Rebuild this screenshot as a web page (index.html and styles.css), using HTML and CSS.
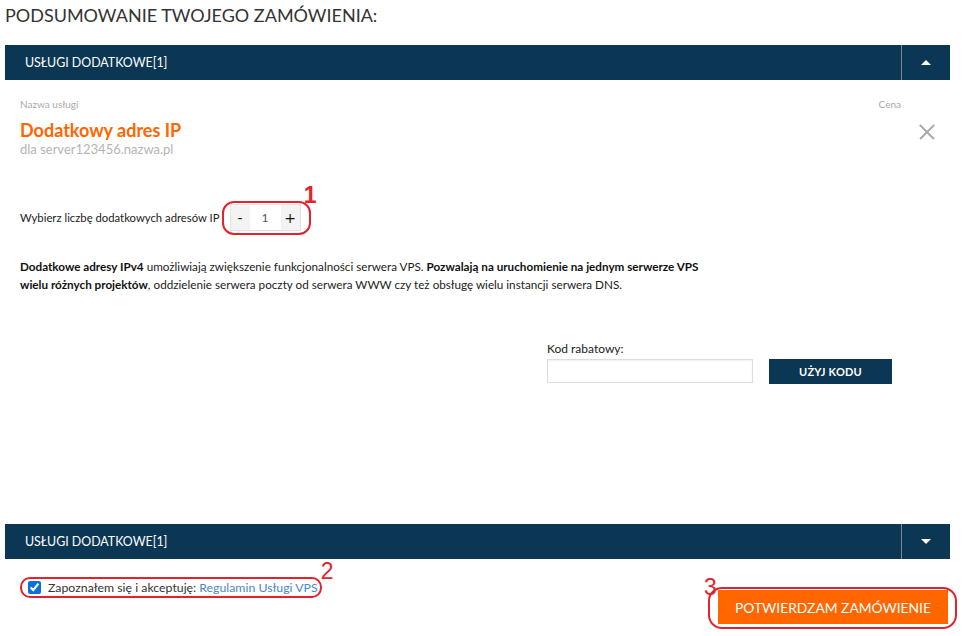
FILE: index.html
```html
<!DOCTYPE html>
<html lang="pl">
<head>
<meta charset="utf-8">
<title>Podsumowanie zamówienia</title>
<link rel="stylesheet" href="styles.css">
</head>
<body>
<div class="page">
  <h1 class="title">PODSUMOWANIE TWOJEGO ZAMÓWIENIA:</h1>

  <div class="bar">
    <div class="bar-title">USŁUGI DODATKOWE[1]</div>
    <div class="bar-toggle"><span class="tri tri-up"></span></div>
  </div>

  <div class="content">
    <div class="cols">
      <span class="label">Nazwa usługi</span>
      <span class="label">Cena</span>
    </div>
    <div class="service">
      <div>
        <div class="service-name">Dodatkowy adres IP</div>
        <div class="service-host">dla server123456.nazwa.pl</div>
      </div>
      <span class="close"></span>
    </div>

    <div class="qty-row">
      <span class="qty-label">Wybierz liczbę dodatkowych adresów IP</span>
      <div class="spinner">
        <span class="spin-btn">-</span>
        <span class="spin-val">1</span>
        <span class="spin-btn">+</span>
        <span class="mark mark-1">1</span>
      </div>
    </div>

    <p class="desc"><b>Dodatkowe adresy IPv4</b> umożliwiają zwiększenie funkcjonalności serwera VPS. <b>Pozwalają na uruchomienie na jednym serwerze VPS<br>wielu różnych projektów</b>, oddzielenie serwera poczty od serwera WWW czy też obsługę wielu instancji serwera DNS.</p>

    <div class="promo">
      <label class="promo-label">Kod rabatowy:</label>
      <div class="promo-row">
        <input class="promo-input" type="text">
        <button class="promo-btn">UŻYJ KODU</button>
      </div>
    </div>
  </div>

  <div class="bar">
    <div class="bar-title">USŁUGI DODATKOWE[1]</div>
    <div class="bar-toggle"><span class="tri tri-down"></span></div>
  </div>

  <div class="footer">
    <label class="accept">
      <input type="checkbox" checked>
      <span>Zapoznałem się i akceptuję: <a href="#" class="link">Regulamin Usługi VPS</a></span>
      <span class="mark mark-2">2</span>
    </label>
    <div class="confirm-wrap">
      <button class="confirm">POTWIERDZAM ZAMÓWIENIE</button>
      <span class="mark mark-3">3</span>
    </div>
  </div>
</div>
</body>
</html>
```

FILE: styles.css
```css
* { box-sizing: border-box; }
html, body { margin: 0; padding: 0; background: #fff; }
body { font-family: Lato, "Open Sans", sans-serif; color: #222; }

.page { width: 955px; padding: 0 5px; }

.title {
  margin: 0;
  padding-top: 4px;
  height: 45px;
  font-size: 18px;
  font-weight: 400;
  color: #333;
}

.bar {
  display: flex;
  height: 35px;
  background: #0b3654;
  color: #fff;
}
.bar-title {
  flex: 1;
  display: flex;
  align-items: center;
  padding-left: 20px;
  font-size: 12.4px;
}
.bar-toggle {
  width: 49px;
  border-left: 1px solid #7c8a96;
  display: flex;
  align-items: center;
  justify-content: center;
}
.tri { width: 0; height: 0; border-left: 5px solid transparent; border-right: 5px solid transparent; }
.tri-up { border-bottom: 5px solid #fff; }
.tri-down { border-top: 5px solid #fff; }

.content {
  height: 444px;
  padding: 0 15px;
}
.cols {
  display: flex;
  justify-content: space-between;
  padding-top: 18px;
  padding-right: 34px;
  height: 39px;
}
.label { font-size: 10px; color: #aaa; }

.service { display: flex; justify-content: space-between; align-items: flex-start; }
.service-name { font-size: 18px; font-weight: 700; color: #ff6600; line-height: 22px; }
.service-host { font-size: 13px; color: #b5b5b5; line-height: 16px; }
.close {
  position: relative;
  width: 16px; height: 16px;
  margin-top: 5px;
}
.close::before, .close::after {
  content: "";
  position: absolute;
  left: -2px; top: 7px;
  width: 20px; height: 1.5px;
  background: #a8a8a8;
  transform: rotate(45deg);
}
.close::after { transform: rotate(-45deg); }

.qty-row {
  display: flex;
  align-items: center;
  gap: 10px;
  margin-top: 47px;
}
.qty-label { font-size: 11.3px; color: #222; }
.spinner {
  position: relative;
  display: flex;
  height: 27px;
  border: 1px solid #e2e2e2;
}
.spinner::before {
  content: "";
  position: absolute;
  left: -9px; top: -4px; right: -11px; bottom: -5px;
  border: 2px solid #e3232b;
  border-radius: 12px;
}
.spin-btn {
  width: 19px;
  background: #f3f3f3;
  display: flex; align-items: center; justify-content: center;
  font-size: 14px; color: #111; font-family: "DejaVu Sans", sans-serif;
}
.spin-val {
  width: 31px;
  display: flex; align-items: center; justify-content: center;
  font-size: 12px; color: #555;
}

.mark {
  position: absolute;
  font-family: "Liberation Sans", Arial, sans-serif;
  font-size: 23px;
  color: #e3232b;
  line-height: 1;
}
.mark-1 { right: -17px; top: -21px; font-weight: 700; }

.desc {
  margin: 26px 0 0;
  font-size: 11.7px;
  line-height: 18px;
  color: #222;
}
.desc b { font-weight: 700; color: #111; }

.promo { margin-left: 527px; margin-top: 49px; }
.promo-label { display: block; font-size: 12px; color: #222; line-height: 14px; margin-bottom: 3px; }
.promo-row { display: flex; gap: 16px; }
.promo-input {
  width: 206px; height: 24px;
  border: 1px solid #ddd;
  box-shadow: inset 0 1px 2px rgba(0,0,0,0.06);
  margin: 0; padding: 0 4px;
}
.promo-btn {
  width: 123px; height: 25px;
  background: #0b3654;
  color: #fff;
  border: 0;
  font-family: Lato, sans-serif;
  font-size: 11px;
  font-weight: 700;
  letter-spacing: 0.2px;
  margin: 0;
}

.footer {
  display: flex;
  justify-content: space-between;
  align-items: flex-start;
  padding-top: 18px;
  padding-left: 15px;
  padding-right: 1px;
}
.accept {
  position: relative;
  display: flex;
  align-items: center;
  gap: 7px;
  height: 21px;
  padding-left: 6px;
  padding-right: 2px;
  border: 2px solid #e3232b;
  border-radius: 10px;
  font-size: 12.3px;
  color: #333;
}
.accept input { margin: 0; width: 13px; height: 13px; accent-color: #0b6fe0; }
.link { color: #4a88c7; text-decoration: none; }
.mark-2 { right: -14px; top: -19px; }

.confirm-wrap {
  position: relative;
  margin-top: 10px;
  padding: 1px 7px 3px 8px;
  border: 2px solid #e3232b;
  border-radius: 14px;
  margin-right: -8px;
}
.confirm {
  display: block;
  width: 230px; height: 34px;
  background: #ff6600;
  color: #fff;
  border: 0;
  font-family: Lato, sans-serif;
  font-size: 13.8px;
  margin: 0;
}
.mark-3 { left: -6px; top: -13px; }
```
